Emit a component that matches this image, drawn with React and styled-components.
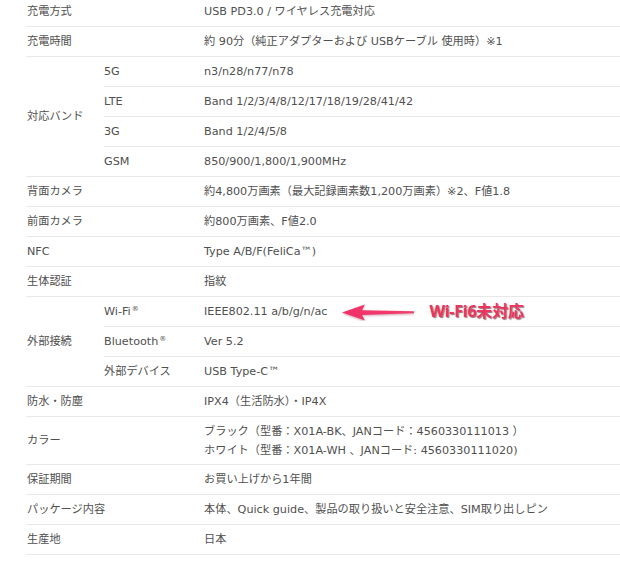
import React from "react";
import styled, { createGlobalStyle } from "styled-components";

const GlobalStyle = createGlobalStyle`
  html, body {
    margin: 0;
    padding: 0;
    background: #ffffff;
  }
  body {
    font-family: "DejaVu Sans", "Noto Sans CJK JP", sans-serif;
    overflow: hidden;
  }
`;

const specs = [
  { label: "充電方式", value: "USB PD3.0 / ワイヤレス充電対応" },
  { label: "充電時間", value: "約 90分（純正アダプターおよび USBケーブル 使用時）※1" },
  {
    label: "対応バンド",
    items: [
      { sub: "5G", value: "n3/n28/n77/n78" },
      { sub: "LTE", value: "Band 1/2/3/4/8/12/17/18/19/28/41/42" },
      { sub: "3G", value: "Band 1/2/4/5/8" },
      { sub: "GSM", value: "850/900/1,800/1,900MHz" },
    ],
  },
  { label: "背面カメラ", value: "約4,800万画素（最大記録画素数1,200万画素）※2、F値1.8" },
  { label: "前面カメラ", value: "約800万画素、F値2.0" },
  { label: "NFC", value: "Type A/B/F(FeliCa™)" },
  { label: "生体認証", value: "指紋" },
  {
    label: "外部接続",
    items: [
      { sub: "Wi-Fi", mark: "®", value: "IEEE802.11 a/b/g/n/ac", note: "Wi-Fi6未対応" },
      { sub: "Bluetooth", mark: "®", value: "Ver 5.2" },
      { sub: "外部デバイス", value: "USB Type-C™" },
    ],
  },
  { label: "防水・防塵", value: "IPX4（生活防水）・IP4X" },
  {
    label: "カラー",
    value: [
      "ブラック（型番：X01A-BK、JANコード：4560330111013 ）",
      "ホワイト（型番：X01A-WH 、JANコード: 4560330111020)",
    ],
  },
  { label: "保証期間", value: "お買い上げから1年間" },
  { label: "パッケージ内容", value: "本体、Quick guide、製品の取り扱いと安全注意、SIM取り出しピン" },
  { label: "生産地", value: "日本" },
];

const Page = styled.div`
  padding-left: 26px;
  margin-top: -3px;
`;

const SpecTable = styled.table`
  width: 594px;
  border-collapse: collapse;
  table-layout: fixed;
  color: #505050;
  font-size: 11.2px;
`;

const Cell = styled.td`
  height: 29px;
  padding: 0;
  border-bottom: 1px solid #e8e8e8;
  vertical-align: middle;
  line-height: 19px;
  white-space: nowrap;
`;

const LabelCell = styled(Cell)`
  padding-left: 1px;
`;

const ValueCell = styled(Cell)`
  padding-top: ${(p) => (p.$tall ? "5px" : "0")};
  padding-bottom: ${(p) => (p.$tall ? "4px" : "0")};
`;

const Mark = styled.sup`
  font-size: 7px;
  vertical-align: 4px;
  line-height: 0;
  margin-left: 1px;
`;

const ValueLine = styled.div`
  display: flex;
  align-items: center;
`;

const Note = styled.span`
  display: inline-flex;
  align-items: center;
  gap: 14px;
  margin-left: 15px;
`;

const NoteText = styled.span`
  color: #ea3462;
  font-family: "Noto Sans", "Noto Sans CJK JP", sans-serif;
  font-size: 16px;
  font-weight: 700;
  letter-spacing: -0.2px;
  text-shadow: 1px 1px 1px rgba(60, 0, 10, 0.55);
`;

const Arrow = () => (
  <svg width="73" height="18" viewBox="0 0 73 18">
    <defs>
      <linearGradient id="ag" x1="0" y1="0" x2="1" y2="0">
        <stop offset="0" stopColor="#f0306a" />
        <stop offset="1" stopColor="#f2416d" />
      </linearGradient>
    </defs>
    <path
      d="M0 9.5 L23 1.5 L20 7.2 L72 8.2 L72 10.2 L20 12 L23 17.5 Z"
      fill="url(#ag)"
      style={{ filter: "drop-shadow(0.5px 1px 0.8px rgba(120,0,30,0.35))" }}
    />
  </svg>
);

const renderValue = (value, note) => (
  <ValueLine>
    <span>{value}</span>
    {note && (
      <Note>
        <Arrow />
        <NoteText>{note}</NoteText>
      </Note>
    )}
  </ValueLine>
);

const App = () => (
  <Page>
    <GlobalStyle />
    <SpecTable>
      <colgroup>
        <col style={{ width: 78 }} />
        <col style={{ width: 100 }} />
        <col />
      </colgroup>
      <tbody>
        {specs.map((row) => {
          if (row.items) {
            return row.items.map((item, i) => (
              <tr key={row.label + item.sub}>
                {i === 0 && <LabelCell rowSpan={row.items.length}>{row.label}</LabelCell>}
                <Cell>
                  {item.sub}
                  {item.mark && <Mark>{item.mark}</Mark>}
                </Cell>
                <ValueCell>{renderValue(item.value, item.note)}</ValueCell>
              </tr>
            ));
          }
          const multi = Array.isArray(row.value);
          return (
            <tr key={row.label}>
              <LabelCell colSpan={2}>{row.label}</LabelCell>
              <ValueCell $tall={multi}>
                {multi ? row.value.map((v) => <div key={v}>{v}</div>) : renderValue(row.value)}
              </ValueCell>
            </tr>
          );
        })}
      </tbody>
    </SpecTable>
  </Page>
);

export default App;
